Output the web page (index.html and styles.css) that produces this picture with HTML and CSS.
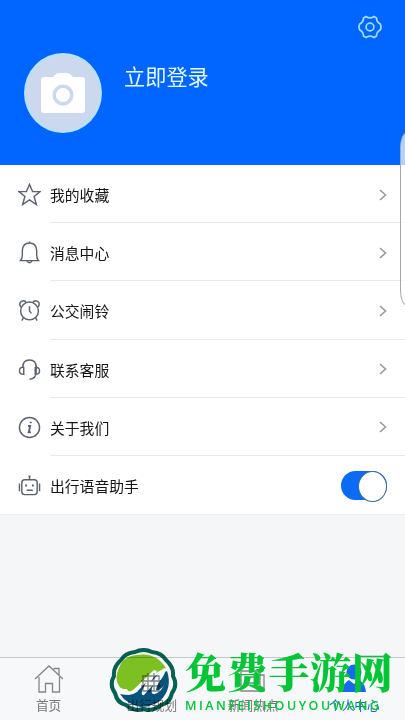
FILE: index.html
```html
<!DOCTYPE html>
<html lang="zh-CN">
<head>
    <meta charset="UTF-8">
    <meta name="viewport" content="width=device-width, initial-scale=1.0">
    <title>个人中心</title>
    <link rel="stylesheet" href="styles.css">
</head>
<body>

    <header class="profile">
        <div class="avatar">
            <svg width="44" height="42" viewBox="0 0 44 42">
                <path fill="#fff" d="M3 5h9l3-3q1-1 3-1h8q2 0 3 1l3 3h9q3 0 3 3v30q0 3-3 3H3q-3 0-3-3V8q0-3 3-3z"/>
                <circle cx="22" cy="23" r="8.8" fill="#fff" stroke="#ccd8ee" stroke-width="3.5"/>
            </svg>
        </div>
        <a class="login">立即登录</a>
        <svg class="settings" width="24" height="24" viewBox="0 0 24 24">
            <path d="M8 1.500Q12 4.200 16 1.500L18.500 3Q18.500 7 22.200 9Q23.800 12 22.200 15Q18.500 17 18.500 21L16 22.500Q12 19.800 8 22.500L5.500 21Q5.500 17 1.800 15Q.2 12 1.800 9Q5.500 7 5.500 3Z"/>
            <circle cx="12" cy="12" r="3.9"/>
        </svg>
    </header>

    <main class="menu">
        <div class="item">
            <svg class="icon" viewBox="0 0 24 24"><path d="M12 1.500L15.200 9H23L16.800 14L19.200 22.500L12 17.600L4.800 22.500L7.200 14L1 9H8.800Z"/></svg>
            <div class="row"><span>我的收藏</span><svg class="arrow" viewBox="0 0 8 12"><path d="M1 1l5.500 5L1 11"/></svg></div>
        </div>
        <div class="item">
            <svg class="icon" viewBox="0 0 24 24"><path d="M2.500 20.500Q4.500 18.500 4.500 15V10Q5 2 12 2Q19 2 19.500 10V15Q19.500 18.500 21.500 20.500ZM9 20.500Q12 25 15 20.500M12 .5v1.500"/></svg>
            <div class="row"><span>消息中心</span><svg class="arrow" viewBox="0 0 8 12"><path d="M1 1l5.500 5L1 11"/></svg></div>
        </div>
        <div class="item">
            <svg class="icon" viewBox="0 0 24 24"><circle cx="12" cy="12.500" r="9.300"/><path d="M12 7.500v5l2 2.500M3 8.500Q.5 4.500 3.500 2.500Q7 .8 8.800 4M21 8.500Q23.500 4.500 20.500 2.500Q17 .8 15.200 4M5.800 19.500L4 22.500M18.200 19.500L20 22.500"/></svg>
            <div class="row"><span>公交闹铃</span><svg class="arrow" viewBox="0 0 8 12"><path d="M1 1l5.500 5L1 11"/></svg></div>
        </div>
        <div class="item">
            <svg class="icon" viewBox="0 0 24 24"><path d="M5 9.500Q5 2 12 2Q19 2 19 9.500V15Q19 21 12 22.200M6 9.500v7.500Q1.500 17 1.500 13.200Q1.500 9.500 6 9.500M18 9.500v7.500Q22.500 17 22.500 13.200Q22.500 9.500 18 9.500"/></svg>
            <div class="row"><span>联系客服</span><svg class="arrow" viewBox="0 0 8 12"><path d="M1 1l5.500 5L1 11"/></svg></div>
        </div>
        <div class="item">
            <svg class="icon" viewBox="0 0 24 24"><circle cx="12" cy="12" r="10.500"/><path class="bold" d="M13.300 6v1.500M10.500 10.500h2.200l-1.500 6.500h2.300"/></svg>
            <div class="row"><span>关于我们</span><svg class="arrow" viewBox="0 0 8 12"><path d="M1 1l5.500 5L1 11"/></svg></div>
        </div>
        <div class="item">
            <svg class="icon" viewBox="0 0 24 24"><rect x="4" y="6" width="16" height="15.500" rx="3"/><path d="M12 6V2.500M1.500 10v8M22.500 10v8M9 17h6.500"/><path class="bold" d="M12 1.500v2M8.500 11v2M15.500 11v2"/></svg>
            <div class="row"><span>出行语音助手</span><div class="switch"></div></div>
        </div>
    </main>

    <nav class="tabs">
        <div class="tab home">
            <svg width="32" height="30" viewBox="0 0 32 30"><path d="M2 15L16 2L30 15M6 13V28H12.500V19.500H19.500V28H26.500V13M20.500 4.500H26V11"/></svg>
            <span>首页</span>
        </div>
        <div class="tab">
            <svg width="32" height="30" viewBox="0 0 32 30"><path d="M7 12h16v15H7zM5 17h20M5 22h20M12 9v18M18 9v18"/></svg>
            <span>出行规划</span>
        </div>
        <div class="tab">
            <svg width="32" height="30" viewBox="0 0 32 30"><path d="M4 7H23V27H4zM23 11H27V27H4M8 13h10M8 19h10"/></svg>
            <span>新闻热点</span>
        </div>
        <div class="tab active">
            <svg width="32" height="30" viewBox="0 0 32 30"><circle cx="16" cy="8" r="7.500"/><path d="M4 28Q5 19 11 16L16 20L21 16Q27 19 28 28Z"/></svg>
            <span>个人中心</span>
        </div>
    </nav>

    <div class="edge-panel"></div>

    <div class="brand">
        <svg class="logo" width="69" height="66" viewBox="0 0 69 66">
            <path fill="#fff" stroke="#066354" stroke-width="4" stroke-linejoin="round" d="M26 4Q34.500 0 43 4Q53 5 57 12Q65 19 64 28Q69 37 63 45Q61 55 52 57Q44 64 34.500 61Q25 64 17 57Q8 55 6 45Q0 37 5 28Q4 19 12 12Q16 5 26 4Z"/>
            <path fill="#80c622" d="M10 38Q5 30 10 20Q14 8 28 7Q47 4 57 20Q46 24 38 32Q30 37 25 42Q19 46 18 41Q13 42 10 38Z"/>
            <path fill="#07557e" d="M11 46Q23 49 31 40Q40 29 58 23Q64 40 51 53Q34 64 19 54Q14 51 11 46Z"/>
            <path fill="#fff" d="M10 40Q15 41 18 42Q19 45 24 42L45 22L48 23L42 34L55 20Q59 22 51 33Q47 39 47 42Q50 43 55 38Q49 47 44 46Q41 45 44 37L35 47Q32 48 33 43L37 34L28 44Q20 50 10 44Z"/>
        </svg>
        <div class="brand-text">
            <div class="brand-name">免费手游网</div>
            <div class="brand-latin">MIANFEISHOUYOUWANG</div>
        </div>
    </div>

</body>
</html>
```
FILE: styles.css
```css
* {
    box-sizing: border-box;
}

body {
    font-family: "Liberation Sans", "Noto Sans CJK SC", sans-serif;
    background-color: #f5f6f8;
    margin: 0;
    height: 720px;
    display: flex;
    flex-direction: column;
    position: relative;
    overflow: hidden;
}

svg {
    display: block;
    flex-shrink: 0;
}

.profile {
    height: 165px;
    background-color: #0066ff;
    display: flex;
    align-items: flex-start;
    padding: 15px 23px 0 24px;
}

.avatar {
    width: 78px;
    height: 80px;
    margin-top: 38px;
    border: 2px solid #b5e2ff;
    border-radius: 50%;
    background-color: #ccd8ee;
    display: flex;
    align-items: center;
    justify-content: center;
}

.login {
    margin: 47px auto 0 22px;
    color: #e5faff;
    font-size: 21.200px;
    line-height: 32px;
}

.settings {
    fill: none;
    stroke: #a5ddff;
    stroke-width: 1.7;
}

.menu {
    background-color: #fff;
    height: 350px;
    padding-left: 18px;
    display: grid;
    grid-template-rows: repeat(6, 1fr);
    border-bottom: 1px solid #ededee;
}

.item {
    display: flex;
    align-items: center;
}

.icon {
    width: 23px;
    height: 23px;
    margin: 1px 9px 0 0;
    fill: none;
    stroke: #5c6270;
    stroke-width: 1.5;
}

.bold {
    stroke-width: 2;
}

.row {
    flex: 1;
    height: 100%;
    display: flex;
    align-items: center;
    justify-content: space-between;
    padding: 2px 18px 0 0;
    border-bottom: 1px solid #e9e9ea;
    color: #151515;
    font-size: 14.800px;
}

.item:last-child .row {
    border-bottom: none;
}

.arrow {
    width: 8px;
    height: 12px;
    fill: none;
    stroke: #999;
    stroke-width: 1.6;
}

.switch {
    width: 46px;
    height: 29px;
    border-radius: 15px;
    background-color: #0b6bf5;
    display: flex;
    justify-content: flex-end;
}

.switch::after {
    content: "";
    width: 27px;
    height: 29px;
    border: 1px solid #3e6b8f;
    border-radius: 50%;
    background-color: #fff;
}

.tabs {
    margin-top: auto;
    height: 63px;
    border-top: 1px solid #c6c7c9;
    background-color: #f7f8fa;
    display: grid;
    grid-template-columns: repeat(4, 1fr);
}

.tab {
    display: flex;
    flex-direction: column;
    align-items: center;
    padding-top: 6px;
    color: #777;
    font-size: 12.700px;
    line-height: 18px;
}

.home {
    padding-right: 4px;
}

.tab svg {
    fill: none;
    stroke: #858585;
    stroke-width: 1.3;
}

.tab span {
    margin-top: 3px;
}

.active {
    color: #2463d5;
}

.active svg {
    fill: #1769ed;
    stroke: none;
}

/* side handle over the right edge of the screen */
.edge-panel {
    position: absolute;
    top: 132px;
    right: -10px;
    width: 15px;
    height: 174px;
    border: 1px solid #a5a8ac;
    border-radius: 13px / 26px;
    background-color: rgba(255, 255, 255, 0.7);
}

.brand {
    position: absolute;
    left: 109px;
    top: 648px;
    display: flex;
    gap: 7px;
    color: #03c536;
}

.logo {
    mix-blend-mode: multiply;
}

.brand-name {
    font-family: "Noto Serif CJK SC", "Noto Sans CJK SC", serif;
    font-size: 41px;
    font-weight: 900;
    line-height: 46px;
    letter-spacing: 0.7px;
    white-space: nowrap;
}

.brand-latin {
    font-family: "Open Sans", sans-serif;
    font-size: 12.500px;
    font-weight: 600;
    line-height: 18px;
    letter-spacing: 2.500px;
    margin-top: 3px;
    white-space: nowrap;
}
```
